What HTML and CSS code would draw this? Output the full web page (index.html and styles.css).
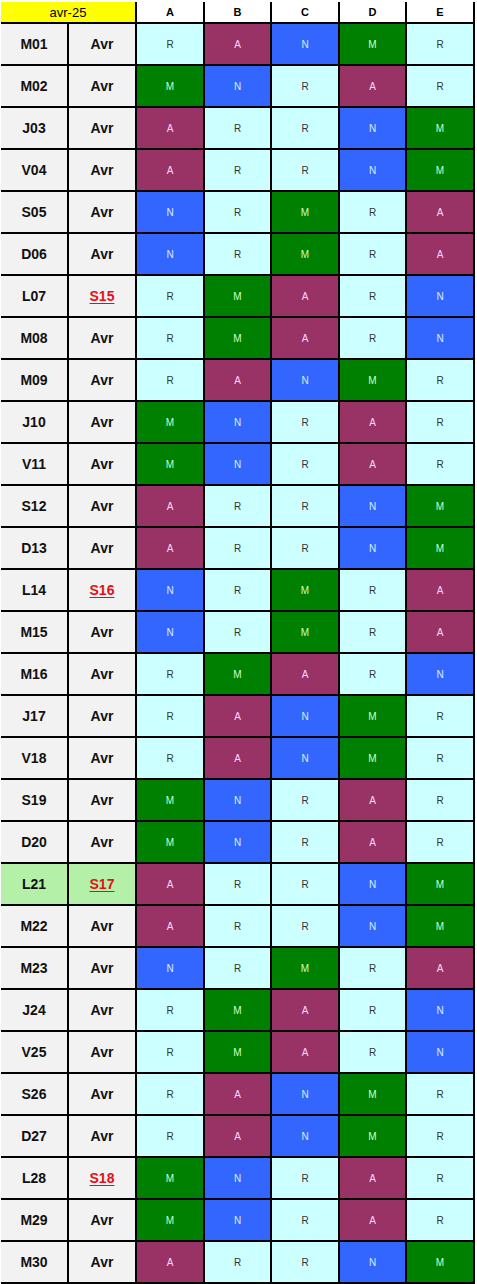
FILE: index.html
```html
<!DOCTYPE html>
<html lang="fr">
<head>
<meta charset="utf-8">
<title>avr-25</title>
<link rel="stylesheet" href="styles.css">
</head>
<body>
<div class="sheet">
  <div class="hd month">avr-25</div>
  <div class="hd col">A</div><div class="hd col">B</div><div class="hd col">C</div><div class="hd col">D</div><div class="hd col">E</div>

  <div class="day">M01</div><div class="wk">Avr</div><div class="c r">R</div><div class="c a">A</div><div class="c n">N</div><div class="c m">M</div><div class="c r">R</div>
  <div class="day">M02</div><div class="wk">Avr</div><div class="c m">M</div><div class="c n">N</div><div class="c r">R</div><div class="c a">A</div><div class="c r">R</div>
  <div class="day">J03</div><div class="wk">Avr</div><div class="c a">A</div><div class="c r">R</div><div class="c r">R</div><div class="c n">N</div><div class="c m">M</div>
  <div class="day">V04</div><div class="wk">Avr</div><div class="c a">A</div><div class="c r">R</div><div class="c r">R</div><div class="c n">N</div><div class="c m">M</div>
  <div class="day">S05</div><div class="wk">Avr</div><div class="c n">N</div><div class="c r">R</div><div class="c m">M</div><div class="c r">R</div><div class="c a">A</div>
  <div class="day">D06</div><div class="wk">Avr</div><div class="c n">N</div><div class="c r">R</div><div class="c m">M</div><div class="c r">R</div><div class="c a">A</div>
  <div class="day">L07</div><div class="wk"><span class="week">S15</span></div><div class="c r">R</div><div class="c m">M</div><div class="c a">A</div><div class="c r">R</div><div class="c n">N</div>
  <div class="day">M08</div><div class="wk">Avr</div><div class="c r">R</div><div class="c m">M</div><div class="c a">A</div><div class="c r">R</div><div class="c n">N</div>
  <div class="day">M09</div><div class="wk">Avr</div><div class="c r">R</div><div class="c a">A</div><div class="c n">N</div><div class="c m">M</div><div class="c r">R</div>
  <div class="day">J10</div><div class="wk">Avr</div><div class="c m">M</div><div class="c n">N</div><div class="c r">R</div><div class="c a">A</div><div class="c r">R</div>
  <div class="day">V11</div><div class="wk">Avr</div><div class="c m">M</div><div class="c n">N</div><div class="c r">R</div><div class="c a">A</div><div class="c r">R</div>
  <div class="day">S12</div><div class="wk">Avr</div><div class="c a">A</div><div class="c r">R</div><div class="c r">R</div><div class="c n">N</div><div class="c m">M</div>
  <div class="day">D13</div><div class="wk">Avr</div><div class="c a">A</div><div class="c r">R</div><div class="c r">R</div><div class="c n">N</div><div class="c m">M</div>
  <div class="day">L14</div><div class="wk"><span class="week">S16</span></div><div class="c n">N</div><div class="c r">R</div><div class="c m">M</div><div class="c r">R</div><div class="c a">A</div>
  <div class="day">M15</div><div class="wk">Avr</div><div class="c n">N</div><div class="c r">R</div><div class="c m">M</div><div class="c r">R</div><div class="c a">A</div>
  <div class="day">M16</div><div class="wk">Avr</div><div class="c r">R</div><div class="c m">M</div><div class="c a">A</div><div class="c r">R</div><div class="c n">N</div>
  <div class="day">J17</div><div class="wk">Avr</div><div class="c r">R</div><div class="c a">A</div><div class="c n">N</div><div class="c m">M</div><div class="c r">R</div>
  <div class="day">V18</div><div class="wk">Avr</div><div class="c r">R</div><div class="c a">A</div><div class="c n">N</div><div class="c m">M</div><div class="c r">R</div>
  <div class="day">S19</div><div class="wk">Avr</div><div class="c m">M</div><div class="c n">N</div><div class="c r">R</div><div class="c a">A</div><div class="c r">R</div>
  <div class="day">D20</div><div class="wk">Avr</div><div class="c m">M</div><div class="c n">N</div><div class="c r">R</div><div class="c a">A</div><div class="c r">R</div>
  <div class="day today">L21</div><div class="wk today"><span class="week">S17</span></div><div class="c a">A</div><div class="c r">R</div><div class="c r">R</div><div class="c n">N</div><div class="c m">M</div>
  <div class="day">M22</div><div class="wk">Avr</div><div class="c a">A</div><div class="c r">R</div><div class="c r">R</div><div class="c n">N</div><div class="c m">M</div>
  <div class="day">M23</div><div class="wk">Avr</div><div class="c n">N</div><div class="c r">R</div><div class="c m">M</div><div class="c r">R</div><div class="c a">A</div>
  <div class="day">J24</div><div class="wk">Avr</div><div class="c r">R</div><div class="c m">M</div><div class="c a">A</div><div class="c r">R</div><div class="c n">N</div>
  <div class="day">V25</div><div class="wk">Avr</div><div class="c r">R</div><div class="c m">M</div><div class="c a">A</div><div class="c r">R</div><div class="c n">N</div>
  <div class="day">S26</div><div class="wk">Avr</div><div class="c r">R</div><div class="c a">A</div><div class="c n">N</div><div class="c m">M</div><div class="c r">R</div>
  <div class="day">D27</div><div class="wk">Avr</div><div class="c r">R</div><div class="c a">A</div><div class="c n">N</div><div class="c m">M</div><div class="c r">R</div>
  <div class="day">L28</div><div class="wk"><span class="week">S18</span></div><div class="c m">M</div><div class="c n">N</div><div class="c r">R</div><div class="c a">A</div><div class="c r">R</div>
  <div class="day">M29</div><div class="wk">Avr</div><div class="c m">M</div><div class="c n">N</div><div class="c r">R</div><div class="c a">A</div><div class="c r">R</div>
  <div class="day">M30</div><div class="wk">Avr</div><div class="c a">A</div><div class="c r">R</div><div class="c r">R</div><div class="c n">N</div><div class="c m">M</div>
</div>
</body>
</html>
```

FILE: styles.css
```css
html, body {
  margin: 0;
  padding: 0;
  background: #ffffff;
}

body {
  font-family: "Liberation Sans", Arial, sans-serif;
  padding: 2px 0 0 1px;
}

.sheet {
  display: grid;
  width: 474px;
  box-sizing: border-box;
  grid-template-columns: 66px 66px 66px 65px 66px 65px 66px;
  grid-template-rows: 20px repeat(30, 40px);
  gap: 2px;
  padding: 0 2px 2px 0;
  background: #000000;
}

.sheet > div {
  display: flex;
  align-items: center;
  justify-content: center;
}

.hd {
  background: #ffffff;
  color: #000000;
}

.month {
  grid-column: span 2;
  background: #ffff00;
  font-size: 13px;
  padding-top: 1px;
}

.col {
  font-size: 11px;
  font-weight: bold;
}

.day, .wk {
  background: #f2f2f2;
  color: #111111;
  font-size: 14px;
  font-weight: bold;
}

.today {
  background: #b5f0a9 !important;
}

.week {
  color: #e3101a;
  text-decoration: underline;
  text-underline-offset: 2px;
}

.c {
  font-size: 10px;
}

.r {
  background: #ccffff;
  color: #333333;
}

.a {
  background: #993366;
  color: #ffd6ff;
}

.n {
  background: #3366ff;
  color: #d8f0ff;
}

.m {
  background: #008000;
  color: #ccffcc;
}
```
